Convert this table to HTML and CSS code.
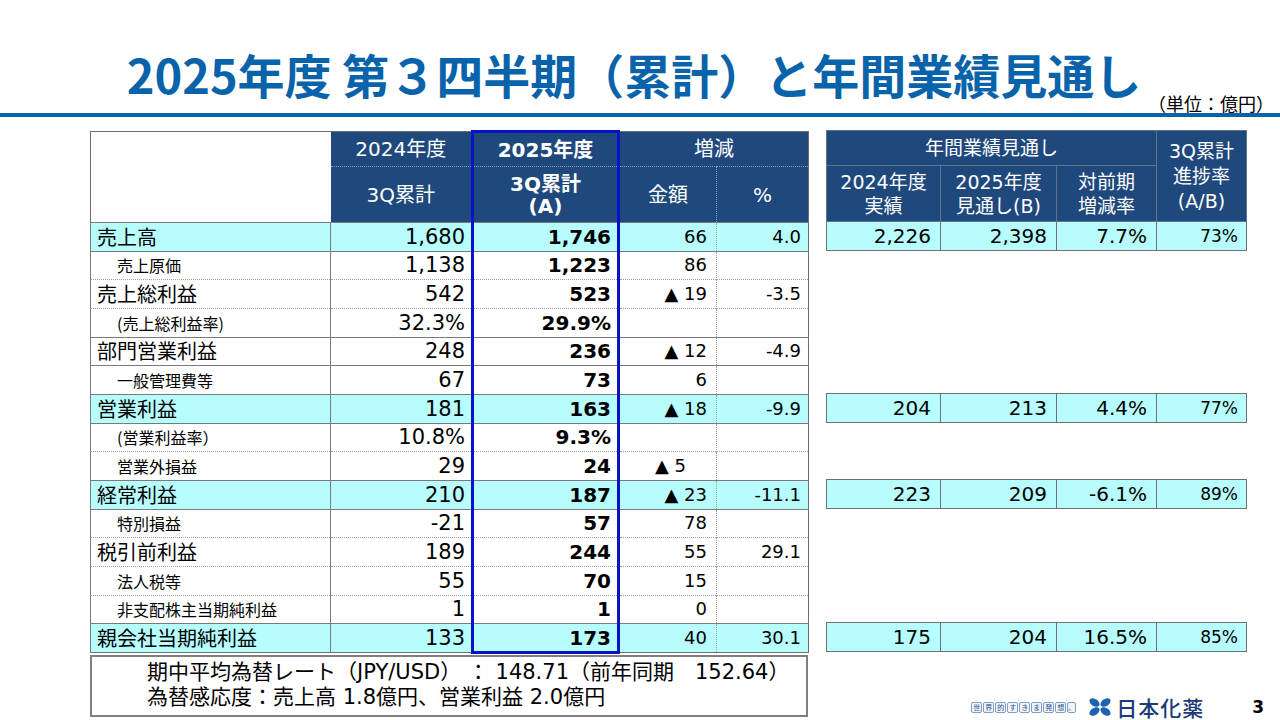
FILE: index.html
```html
<!DOCTYPE html>
<html lang="ja">
<head>
<meta charset="utf-8">
<link rel="stylesheet" href="styles.css">
</head>
<body>
<header class="top">
  <h1>2025年度 第３四半期（累計）と年間業績見通し</h1>
  <span class="unit">（単位：億円）</span>
</header>
<div class="rule"></div>
<main class="main">
  <section class="left">
    <table class="pl">
      <colgroup><col class="w-l"><col class="w-a"><col class="w-b"><col class="w-d"><col class="w-p"></colgroup>
      <thead>
        <tr class="h1">
          <th class="blank" rowspan="2"></th>
          <th>2024年度</th>
          <th class="cur">2025年度</th>
          <th colspan="2">増減</th>
        </tr>
        <tr class="h2">
          <th>3Q累計</th>
          <th class="cur two">3Q累計<br>(A)</th>
          <th>金額</th>
          <th class="p">%</th>
        </tr>
      </thead>
      <tbody>
        <tr class="hl"><td class="lbl">売上高</td><td class="n">1,680</td><td class="n cur">1,746</td><td class="d">66</td><td class="p">4.0</td></tr>
        <tr class="sub"><td class="lbl">売上原価</td><td class="n">1,138</td><td class="n cur">1,223</td><td class="d">86</td><td class="p"></td></tr>
        <tr class="dot"><td class="lbl">売上総利益</td><td class="n">542</td><td class="n cur">523</td><td class="d">▲ 19</td><td class="p">-3.5</td></tr>
        <tr class="sub dot"><td class="lbl">(売上総利益率)</td><td class="n">32.3%</td><td class="n cur">29.9%</td><td class="d"></td><td class="p"></td></tr>
        <tr><td class="lbl">部門営業利益</td><td class="n">248</td><td class="n cur">236</td><td class="d">▲ 12</td><td class="p">-4.9</td></tr>
        <tr class="sub"><td class="lbl">一般管理費等</td><td class="n">67</td><td class="n cur">73</td><td class="d">6</td><td class="p"></td></tr>
        <tr class="hl"><td class="lbl">営業利益</td><td class="n">181</td><td class="n cur">163</td><td class="d">▲ 18</td><td class="p">-9.9</td></tr>
        <tr class="sub"><td class="lbl">(営業利益率）</td><td class="n">10.8%</td><td class="n cur">9.3%</td><td class="d"></td><td class="p"></td></tr>
        <tr class="sub dot"><td class="lbl">営業外損益</td><td class="n">29</td><td class="n cur">24</td><td class="d lag">▲ 5</td><td class="p"></td></tr>
        <tr class="hl"><td class="lbl">経常利益</td><td class="n">210</td><td class="n cur">187</td><td class="d">▲ 23</td><td class="p">-11.1</td></tr>
        <tr class="sub"><td class="lbl">特別損益</td><td class="n">-21</td><td class="n cur">57</td><td class="d">78</td><td class="p"></td></tr>
        <tr class="dot"><td class="lbl">税引前利益</td><td class="n">189</td><td class="n cur">244</td><td class="d">55</td><td class="p">29.1</td></tr>
        <tr class="sub dot"><td class="lbl">法人税等</td><td class="n">55</td><td class="n cur">70</td><td class="d">15</td><td class="p"></td></tr>
        <tr class="sub dot"><td class="lbl">非支配株主当期純利益</td><td class="n">1</td><td class="n cur">1</td><td class="d">0</td><td class="p"></td></tr>
        <tr class="hl last"><td class="lbl">親会社当期純利益</td><td class="n">133</td><td class="n cur">173</td><td class="d">40</td><td class="p">30.1</td></tr>
      </tbody>
    </table>
    <div class="fx">
      <p>期中平均為替レート（JPY/USD） ： 148.71（前年同期　152.64）</p>
      <p>為替感応度：売上高 1.8億円、営業利益 2.0億円</p>
    </div>
  </section>
  <section class="right">
    <table class="fc">
      <colgroup><col class="w-f1"><col class="w-f2"><col class="w-f3"><col class="w-f4"></colgroup>
      <thead>
        <tr class="h1">
          <th colspan="3">年間業績見通し</th>
          <th class="prog" rowspan="2">3Q累計<br>進捗率<br>(A/B)</th>
        </tr>
        <tr class="h2">
          <th>2024年度<br>実績</th>
          <th>2025年度<br>見通し(B)</th>
          <th>対前期<br>増減率</th>
        </tr>
      </thead>
      <tbody>
        <tr class="hl"><td>2,226</td><td>2,398</td><td>7.7%</td><td class="r">73%</td></tr>
        <tr><td></td><td></td><td></td><td></td></tr>
        <tr><td></td><td></td><td></td><td></td></tr>
        <tr><td></td><td></td><td></td><td></td></tr>
        <tr><td></td><td></td><td></td><td></td></tr>
        <tr><td></td><td></td><td></td><td></td></tr>
        <tr class="hl"><td>204</td><td>213</td><td>4.4%</td><td class="r">77%</td></tr>
        <tr><td></td><td></td><td></td><td></td></tr>
        <tr><td></td><td></td><td></td><td></td></tr>
        <tr class="hl"><td>223</td><td>209</td><td>-6.1%</td><td class="r">89%</td></tr>
        <tr><td></td><td></td><td></td><td></td></tr>
        <tr><td></td><td></td><td></td><td></td></tr>
        <tr><td></td><td></td><td></td><td></td></tr>
        <tr><td></td><td></td><td></td><td></td></tr>
        <tr class="hl"><td>175</td><td>204</td><td>16.5%</td><td class="r">85%</td></tr>
      </tbody>
    </table>
    <footer class="foot">
      <span class="tag"><i>世</i><i>界</i><i>的</i><i>す</i><i>き</i><i>ま</i><i>発</i><i>想</i><i class="dotc">。</i></span>
      <svg class="mark" viewBox="0 0 24 20" width="24" height="20" aria-hidden="true">
        <ellipse cx="6.5" cy="5.5" rx="5.6" ry="3.6" transform="rotate(35 6.5 5.5)" fill="#1d63b4"/>
        <ellipse cx="17.5" cy="5.5" rx="5.6" ry="3.6" transform="rotate(-35 17.5 5.5)" fill="#1d63b4"/>
        <ellipse cx="6.5" cy="14.5" rx="5.6" ry="3.6" transform="rotate(-35 6.5 14.5)" fill="#1d63b4"/>
        <ellipse cx="17.5" cy="14.5" rx="5.6" ry="3.6" transform="rotate(35 17.5 14.5)" fill="#1d63b4"/>
      </svg>
      <span class="brand">日本化薬</span>
      <span class="page">3</span>
    </footer>
  </section>
</main>
</body>
</html>
```

FILE: styles.css
```css
html, body {
  margin: 0;
  padding: 0;
}
body {
  width: 1280px;
  height: 720px;
  overflow: hidden;
  background: #ffffff;
  color: #000000;
  font-family: "DejaVu Sans", "Noto Sans CJK JP", sans-serif;
}

/* ---------- title ---------- */
.top {
  position: relative;
  height: 113px;
}
.top h1 {
  margin: 0;
  padding-top: 54px;
  padding-right: 12px;
  font-family: "Noto Sans CJK JP", sans-serif;
  font-weight: 700;
  font-size: 47px;
  line-height: 40px;
  color: #0963aa;
  text-align: center;
}
.unit {
  position: absolute;
  right: 6px;
  top: 94px;
  font-family: "Noto Sans CJK JP", sans-serif;
  font-size: 18px;
  line-height: 19px;
}
.rule {
  height: 4px;
  background: #0963aa;
}

/* ---------- layout ---------- */
.main {
  display: flex;
  padding-top: 13px;
  box-sizing: border-box;
  height: 603px;
}
.left {
  width: 718px;
  margin-left: 90px;
  display: flex;
  flex-direction: column;
}
.right {
  margin-left: 18px;
  flex: 1;
  display: flex;
  flex-direction: column;
}

/* ---------- left table ---------- */
.pl {
  width: 718px;
  table-layout: fixed;
  border-collapse: collapse;
  border: 1px solid #6e6e6e;
}
.w-l { width: 240px; }
.w-a { width: 142px; }
.w-b { width: 146px; }
.w-d { width: 98px; }
.w-p { width: 92px; }

.pl th {
  background: #1f497d;
  color: #ffffff;
  font-weight: normal;
  font-size: 20px;
  line-height: 22px;
  padding: 0;
  text-align: center;
  vertical-align: middle;
}
.pl tr.h1 { height: 35px; }
.pl tr.h2 { height: 56px; }
.pl tr.h2 th { border-top: 1px dotted #8d9fb8; }
.pl th.cur { font-weight: bold; }
.pl th.p { border-left: 1px dotted #8d9fb8; }
.pl th.blank {
  background: #ffffff;
  border-top: 1px solid #6e6e6e;
  border-left: 1px solid #6e6e6e;
}

.pl tbody tr { height: 28.67px; }
.pl td {
  padding: 0;
  white-space: nowrap;
  vertical-align: middle;
  border-top: 1px solid #7a7a7a;
  border-left: 1px solid #7a7a7a;
  line-height: 24px;
}
.pl tr.dot td { border-top: 1px dotted #a3a3a3; }
.pl td.p { border-left: 1px dotted #a3a3a3; }

.pl .cur {
  border-left: 3px solid #0a12c8;
  border-right: 3px solid #0a12c8;
}
.pl tr.h1 th.cur { border-top: 3px solid #0a12c8; }
.pl tr.last td.cur { border-bottom: 3px solid #0a12c8; }

.pl td.lbl {
  text-align: left;
  font-family: "Noto Sans CJK JP", sans-serif;
  font-size: 20px;
  padding-left: 6px;
}
.pl tr.sub td.lbl {
  font-size: 16px;
  padding-left: 26px;
}
.pl td.n {
  text-align: right;
  font-size: 21px;
  padding-right: 6px;
}
.pl td.n.cur {
  font-weight: bold;
  font-size: 20px;
  padding-right: 6px;
}
.pl td.d {
  text-align: right;
  font-size: 18px;
  padding-right: 9px;
}
.pl td.d.lag { padding-right: 30px; }
.pl td.p {
  text-align: right;
  font-size: 18px;
  padding-right: 7px;
}
.pl tr.hl td { background: #b7fdfd; }

/* ---------- fx box ---------- */
.fx {
  margin-top: 1px;
  height: 62px;
  box-sizing: border-box;
  border: 2px solid #7f7f7f;
  padding: 3px 0 0 55px;
  font-size: 21px;
  line-height: 25px;
}
.fx p { margin: 0; white-space: nowrap; }

/* ---------- right table ---------- */
.fc {
  width: 420px;
  table-layout: fixed;
  border-collapse: collapse;
}
.w-f1 { width: 114px; }
.w-f2 { width: 116px; }
.w-f3 { width: 100px; }
.w-f4 { width: 90px; }

.fc th {
  background: #1f497d;
  color: #ffffff;
  font-weight: normal;
  font-size: 19px;
  line-height: 24px;
  padding: 0;
  text-align: center;
  vertical-align: middle;
  border: 1px solid #60728c;
}
.fc th.prog { line-height: 25px; }
.fc tr.h1 { height: 35px; }
.fc tr.h2 { height: 56px; }
.fc tbody tr { height: 28.67px; }
.fc td {
  padding: 0;
  border: none;
  line-height: 24px;
}
.fc tr.hl td {
  background: #b7fdfd;
  border: 1px solid #707070;
  text-align: right;
  font-size: 20px;
  padding-right: 9px;
  white-space: nowrap;
}
.fc tr.hl td.r {
  font-size: 17px;
  padding-right: 8px;
}

/* ---------- footer ---------- */
.foot {
  margin-top: auto;
  height: 24px;
  display: flex;
  align-items: center;
  justify-content: flex-end;
  padding-right: 16px;
  margin-bottom: 1px;
}
.tag {
  display: flex;
  gap: 1px;
  margin-right: 12px;
}
.tag i {
  font-style: normal;
  display: block;
  width: 9px;
  height: 9px;
  border: 1px solid #7e9cc6;
  border-radius: 2px;
  background: #f2f6fc;
  color: #2b4f88;
  font-family: "Noto Sans CJK JP", sans-serif;
  font-size: 7px;
  line-height: 9px;
  text-align: center;
}
.tag i.dotc { width: 7px; }
.mark { margin-right: 4px; }
.brand {
  font-family: "Noto Sans CJK JP", sans-serif;
  font-size: 21px;
  line-height: 24px;
  color: #1b3a78;
  font-weight: 500;
  letter-spacing: 1px;
}
.page {
  margin-left: 48px;
  font-family: "DejaVu Sans", sans-serif;
  font-weight: bold;
  font-size: 17px;
}
```
